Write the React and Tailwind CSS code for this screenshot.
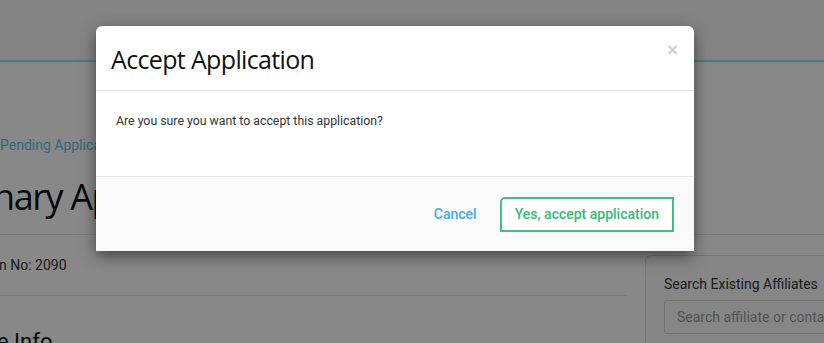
import React from "react";

export default function App() {
  return (
    <div className="relative w-[824px] h-[343px] overflow-hidden bg-white font-['Roboto',sans-serif]">
      {/* page header */}
      <div className="h-[62px] bg-[#f8f8f8] border-b-2 border-[#93e3ef]" />

      {/* page content */}
      <div className="flex">
        <div className="w-[630px] shrink-0 ml-[-3px]">
          <div className="pt-[74px] text-[14px] leading-[18px] text-[#5fbfe6] pl-[3px]">Pending Applications</div>
          <div className="mt-[21px] text-[36px] leading-[44px] text-[#111] ml-[-4px] font-['Open_Sans',sans-serif] tracking-[-1.4px] whitespace-nowrap">
            nary Application
          </div>
          <div className="mt-[15px] border-t border-[#e6e6e6]" />
          <div className="pt-[21px] pb-[21px] text-[14px] leading-[18px] text-[#333] pl-[2px]">n No: 2090</div>
          <div className="border-t border-[#e6e6e6]" />
          <div className="pt-[33px] text-[22px] leading-[26px] text-[#111]">e Info</div>
        </div>
        <div className="flex-1 pt-[172px] flex flex-col">
          <div className="border-t border-[#e6e6e6]" />
          <div className="mt-[20px] ml-[18px] rounded-tl-[6px] border-l border-t border-[#dcdcdc] bg-[#fbfbfb] pl-[18px] pt-[19px] h-[120px]">
            <div className="text-[14px] leading-[18px] text-[#333]">Search Existing Affiliates</div>
            <div className="mt-[7px] h-[34px] rounded-l-[4px] border-l border-y border-[#d6d6d6] bg-[#fcfcfc] pl-[12px] flex items-center text-[14px] text-[#9a9a9a] whitespace-nowrap">
              Search affiliate or contact
            </div>
          </div>
        </div>
      </div>

      {/* overlay */}
      <div className="absolute inset-0 bg-black/[0.467]" />

      {/* modal */}
      <div className="absolute left-[96px] top-[26px] w-[598px] bg-white rounded-t-[6px] shadow-[0_5px_15px_rgba(0,0,0,0.5)]">
        <div className="relative h-[65px] border-b border-[#e5e5e5] pl-[15px] flex items-center">
          <h3 className="text-[25px] leading-[30px] text-[#111] font-['Open_Sans',sans-serif] tracking-[-0.65px] pt-[1px]">
            Accept Application
          </h3>
          <span className="absolute right-[16px] top-[14px] text-[19px] leading-[20px] font-bold text-[#cfcfcf] font-['Liberation_Sans',sans-serif]">
            ×
          </span>
        </div>
        <div className="h-[85px] pl-[20px] pt-[21px] text-[12.3px] leading-[18px] text-[#333]">
          Are you sure you want to accept this application?
        </div>
        <div className="h-[75px] border-t border-[#e5e5e5] bg-[#fafafa] flex items-center justify-end pr-[20px] pt-[1px]">
          <button className="text-[14px] font-medium text-[#45ade0] mr-[23px]">Cancel</button>
          <button className="h-[35px] pl-[13px] pr-[13px] border-2 border-[#3fbf80] rounded-tl-[5px] bg-white text-[14px] font-medium text-[#3cb878]">
            Yes, accept application
          </button>
        </div>
      </div>
    </div>
  );
}
